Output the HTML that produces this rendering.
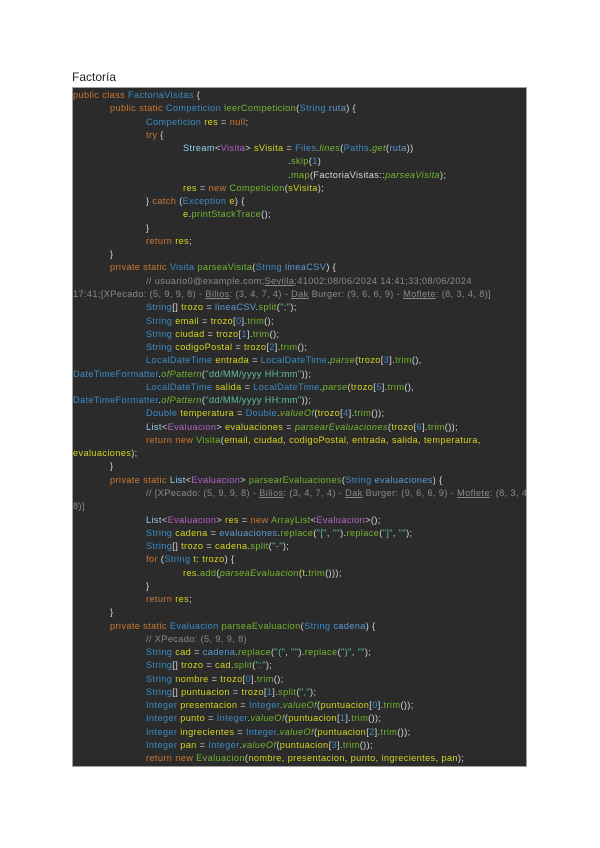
<html><head><style>
body{margin:0;background:#fff;width:600px;height:848px;position:relative;font-family:"Liberation Sans",sans-serif}
.t{position:absolute;left:72px;top:70px;font-size:12px;color:#222}
.c{position:absolute;left:72px;top:87px;width:455px;height:680px;background:#2b2b2b;border:1px solid #a0a0a0;box-sizing:border-box;padding-top:1px}
.l{height:13.28px;line-height:13.28px;font-size:9.2px;white-space:pre;color:#d6d6d6;letter-spacing:.38px;overflow:hidden}
.i1{padding-left:37px}.i2{padding-left:73px}.i3{padding-left:110px}.i4{padding-left:215px}
.k{color:#cc7832}.b{color:#3a8cc6}.g{color:#72b52e}.y{color:#d4d422}.p{color:#b163c9}.cm{color:#8a8a8a}.s{color:#5fc0a0}.w{color:#d0d0d0}.it{font-style:italic;color:#72b52e}.u{text-decoration:underline}.lb{color:#8fd0f0}.n{color:#5b9bd5}
</style></head><body>
<div class="t">Factoría</div>
<div class="c">
<div class="l"><span class="k">public class </span><span class="b">FactoriaVisitas</span> {</div>
<div class="l i1"><span class="k">public static </span><span class="b">Competicion </span><span class="g">leerCompeticion</span>(<span class="b">String </span><span class="n">ruta</span>) {</div>
<div class="l i2"><span class="b">Competicion </span><span class="y">res</span> = <span class="k">null</span>;</div>
<div class="l i2"><span class="k">try</span> {</div>
<div class="l i3"><span class="lb">Stream</span>&lt;<span class="p">Visita</span>&gt; <span class="y">sVisita</span> = <span class="b">Files</span>.<span class="it">lines</span>(<span class="b">Paths</span>.<span class="it">get</span>(<span class="n">ruta</span>))</div>
<div class="l i4">.<span class="g">skip</span>(<span class="b">1</span>)</div>
<div class="l i4">.<span class="g">map</span>(FactoriaVisitas::<span class="it">parseaVisita</span>);</div>
<div class="l i3"><span class="y">res</span> = <span class="k">new </span><span class="g">Competicion</span>(<span class="y">sVisita</span>);</div>
<div class="l i2">} <span class="k">catch </span>(<span class="b">Exception </span><span class="y">e</span>) {</div>
<div class="l i3"><span class="y">e</span>.<span class="g">printStackTrace</span>();</div>
<div class="l i2">}</div>
<div class="l i2"><span class="k">return </span><span class="y">res</span>;</div>
<div class="l i1">}</div>
<div class="l i1"><span class="k">private static </span><span class="b">Visita </span><span class="g">parseaVisita</span>(<span class="b">String </span><span class="n">lineaCSV</span>) {</div>
<div class="l i2 cm">// usuario0@example.com;<span class="u">Sevilla</span>;41002;08/06/2024 14:41;33;08/06/2024</div>
<div class="l cm">17:41;[XPecado: (5, 9, 9, 8) - <span class="u">Bilios</span>: (3, 4, 7, 4) - <span class="u">Dak</span> Burger: (9, 6, 6, 9) - <span class="u">Moflete</span>: (8, 3, 4, 8)]</div>
<div class="l i2"><span class="b">String</span>[] <span class="y">trozo</span> = <span class="n">lineaCSV</span>.<span class="g">split</span>(<span class="s">";"</span>);</div>
<div class="l i2"><span class="b">String </span><span class="y">email</span> = <span class="y">trozo</span>[<span class="b">0</span>].<span class="g">trim</span>();</div>
<div class="l i2"><span class="b">String </span><span class="y">ciudad</span> = <span class="y">trozo</span>[<span class="b">1</span>].<span class="g">trim</span>();</div>
<div class="l i2"><span class="b">String </span><span class="y">codigoPostal</span> = <span class="y">trozo</span>[<span class="b">2</span>].<span class="g">trim</span>();</div>
<div class="l i2"><span class="b">LocalDateTime </span><span class="y">entrada</span> = <span class="b">LocalDateTime</span>.<span class="it">parse</span>(<span class="y">trozo</span>[<span class="b">3</span>].<span class="g">trim</span>(),</div>
<div class="l"><span class="b">DateTimeFormatter</span>.<span class="it">ofPattern</span>(<span class="s">"dd/MM/yyyy HH:mm"</span>));</div>
<div class="l i2"><span class="b">LocalDateTime </span><span class="y">salida</span> = <span class="b">LocalDateTime</span>.<span class="it">parse</span>(<span class="y">trozo</span>[<span class="b">5</span>].<span class="g">trim</span>(),</div>
<div class="l"><span class="b">DateTimeFormatter</span>.<span class="it">ofPattern</span>(<span class="s">"dd/MM/yyyy HH:mm"</span>));</div>
<div class="l i2"><span class="b">Double </span><span class="y">temperatura</span> = <span class="b">Double</span>.<span class="it">valueOf</span>(<span class="y">trozo</span>[<span class="b">4</span>].<span class="g">trim</span>());</div>
<div class="l i2"><span class="lb">List</span>&lt;<span class="p">Evaluacion</span>&gt; <span class="y">evaluaciones</span> = <span class="it">parsearEvaluaciones</span>(<span class="y">trozo</span>[<span class="b">6</span>].<span class="g">trim</span>());</div>
<div class="l i2"><span class="k">return new </span><span class="g">Visita</span>(<span class="y">email, ciudad, codigoPostal, entrada, salida, temperatura,</span></div>
<div class="l"><span class="y">evaluaciones</span>);</div>
<div class="l i1">}</div>
<div class="l i1"><span class="k">private static </span><span class="lb">List</span>&lt;<span class="p">Evaluacion</span>&gt; <span class="g">parsearEvaluaciones</span>(<span class="b">String </span><span class="n">evaluaciones</span>) {</div>
<div class="l i2 cm">// [XPecado: (5, 9, 9, 8) - <span class="u">Bilios</span>: (3, 4, 7, 4) - <span class="u">Dak</span> Burger: (9, 6, 6, 9) - <span class="u">Moflete</span>: (8, 3, 4,</div>
<div class="l cm">8)]</div>
<div class="l i2"><span class="lb">List</span>&lt;<span class="p">Evaluacion</span>&gt; <span class="y">res</span> = <span class="k">new </span><span class="g">ArrayList</span>&lt;<span class="p">Evaluacion</span>&gt;();</div>
<div class="l i2"><span class="b">String </span><span class="y">cadena</span> = <span class="n">evaluaciones</span>.<span class="g">replace</span>(<span class="s">"["</span>, <span class="s">""</span>).<span class="g">replace</span>(<span class="s">"]"</span>, <span class="s">""</span>);</div>
<div class="l i2"><span class="b">String</span>[] <span class="y">trozo</span> = <span class="y">cadena</span>.<span class="g">split</span>(<span class="s">"-"</span>);</div>
<div class="l i2"><span class="k">for </span>(<span class="b">String </span><span class="y">t</span>: <span class="y">trozo</span>) {</div>
<div class="l i3"><span class="y">res</span>.<span class="g">add</span>(<span class="it">parseaEvaluacion</span>(<span class="y">t</span>.<span class="g">trim</span>()));</div>
<div class="l i2">}</div>
<div class="l i2"><span class="k">return </span><span class="y">res</span>;</div>
<div class="l i1">}</div>
<div class="l i1"><span class="k">private static </span><span class="b">Evaluacion </span><span class="g">parseaEvaluacion</span>(<span class="b">String </span><span class="n">cadena</span>) {</div>
<div class="l i2 cm">// XPecado: (5, 9, 9, 8)</div>
<div class="l i2"><span class="b">String </span><span class="y">cad</span> = <span class="n">cadena</span>.<span class="g">replace</span>(<span class="s">"("</span>, <span class="s">""</span>).<span class="g">replace</span>(<span class="s">")"</span>, <span class="s">""</span>);</div>
<div class="l i2"><span class="b">String</span>[] <span class="y">trozo</span> = <span class="y">cad</span>.<span class="g">split</span>(<span class="s">":"</span>);</div>
<div class="l i2"><span class="b">String </span><span class="y">nombre</span> = <span class="y">trozo</span>[<span class="b">0</span>].<span class="g">trim</span>();</div>
<div class="l i2"><span class="b">String</span>[] <span class="y">puntuacion</span> = <span class="y">trozo</span>[<span class="b">1</span>].<span class="g">split</span>(<span class="s">","</span>);</div>
<div class="l i2"><span class="b">Integer </span><span class="y">presentacion</span> = <span class="b">Integer</span>.<span class="it">valueOf</span>(<span class="y">puntuacion</span>[<span class="b">0</span>].<span class="g">trim</span>());</div>
<div class="l i2"><span class="b">Integer </span><span class="y">punto</span> = <span class="b">Integer</span>.<span class="it">valueOf</span>(<span class="y">puntuacion</span>[<span class="b">1</span>].<span class="g">trim</span>());</div>
<div class="l i2"><span class="b">Integer </span><span class="y">ingrecientes</span> = <span class="b">Integer</span>.<span class="it">valueOf</span>(<span class="y">puntuacion</span>[<span class="b">2</span>].<span class="g">trim</span>());</div>
<div class="l i2"><span class="b">Integer </span><span class="y">pan</span> = <span class="b">Integer</span>.<span class="it">valueOf</span>(<span class="y">puntuacion</span>[<span class="b">3</span>].<span class="g">trim</span>());</div>
<div class="l i2"><span class="k">return new </span><span class="g">Evaluacion</span>(<span class="y">nombre, presentacion, punto, ingrecientes, pan</span>);</div>
</div>
</body></html>
